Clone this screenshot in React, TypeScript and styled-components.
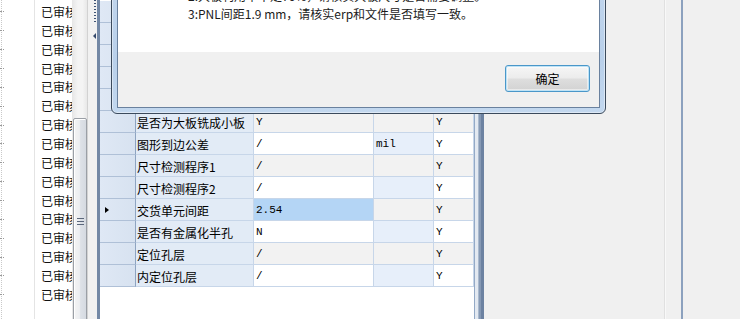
import React from "react";
import styled, { createGlobalStyle } from "styled-components";

const GlobalStyle = createGlobalStyle`
  html, body { margin: 0; padding: 0; background: #f0f0f0; }
  body {
    font-family: "Noto Sans CJK SC", "Liberation Sans", sans-serif;
    font-size: 12px;
    color: #000;
  }
`;

type Tone = "white" | "gray" | "blue" | "name" | "selected";

const toneBg: Record<Tone, string> = {
  white: "#ffffff",
  gray: "#f2f2f2",
  blue: "#e7effa",
  name: "#e2ebf6",
  selected: "#b4d5f5",
};

interface GridItem {
  name: string;
  value: string;
  unit: string;
  flag: string;
}

// 앞의 5행은 대화상자에 가려져 있어 비워 둔다
const hidden: GridItem = { name: "", value: "", unit: "", flag: "" };

const rows: GridItem[] = [
  hidden,
  hidden,
  hidden,
  hidden,
  hidden,
  { name: "是否为大板铣成小板", value: "Y", unit: "", flag: "Y" },
  { name: "图形到边公差", value: "/", unit: "mil", flag: "Y" },
  { name: "尺寸检测程序1", value: "/", unit: "", flag: "Y" },
  { name: "尺寸检测程序2", value: "/", unit: "", flag: "Y" },
  { name: "交货单元间距", value: "2.54", unit: "", flag: "Y" },
  { name: "是否有金属化半孔", value: "N", unit: "", flag: "Y" },
  { name: "定位孔层", value: "/", unit: "", flag: "Y" },
  { name: "内定位孔层", value: "/", unit: "", flag: "Y" },
];

const CURRENT_ROW = 9;

const Screen = styled.div`
  position: relative;
  display: flex;
  width: 740px;
  height: 319px;
  overflow: hidden;
  background: #f0f0f0;
`;

/* left list */
const ListPane = styled.div`
  width: 72px;
  flex-shrink: 0;
  box-sizing: border-box;
  padding-top: 2.5px;
  overflow: hidden;
  background:
    linear-gradient(#e4e4e4, #e4e4e4) 34px 0 / 1px 100% no-repeat,
    repeating-linear-gradient(to bottom, #c9c9c9 0 1px, transparent 1px 2px) 1px 0 / 1px 100% no-repeat,
    #fff;
`;

const ListRow = styled.div`
  display: flex;
  align-items: center;
  height: 18.87px;
`;

const TreeDash = styled.span`
  width: 4px;
  flex-shrink: 0;
  border-top: 1px dotted #9a9a9a;
`;

const ListLabel = styled.span`
  margin-left: 37px;
  white-space: nowrap;
  font-size: 12px;
  line-height: 18px;
  color: #111;
`;

/* list scrollbar */
const ScrollTrack = styled.div`
  width: 15px;
  flex-shrink: 0;
  box-sizing: border-box;
  padding-top: 118px;
  background: linear-gradient(to right, #e6e6e6, #f4f4f4 40%, #f4f4f4 70%, #e8e8e8);
`;

const ScrollThumb = styled.div`
  height: 206px;
  box-sizing: border-box;
  margin-left: 1px;
  border: 1px solid #9a9fa6;
  border-radius: 2px;
  background: linear-gradient(to right, #f4f4f4, #eceef1 45%, #dde1e7 55%, #d5dae1);
  box-shadow: inset 1px 1px 0 #fff;
  display: flex;
  align-items: center;
  justify-content: center;
`;

const ThumbGrip = styled.span`
  width: 7px;
  height: 5px;
  border-top: 1px solid #5b677b;
  border-bottom: 1px solid #5b677b;
  background: linear-gradient(#5b677b, #5b677b) 0 2px / 100% 1px no-repeat;
`;

/* collapsible splitter */
const Splitter = styled.div`
  width: 8px;
  flex-shrink: 0;
  border-left: 1px solid #d2d2d2;
  border-right: 3px solid #7388a5;
  background: #f1f1f1;
  display: flex;
  flex-direction: column;
  align-items: flex-end;
  padding-right: 1px;
`;

const SplitGrip = styled.span`
  width: 2px;
  height: 23px;
  background: repeating-linear-gradient(to bottom, #3d5273 0 1px, transparent 1px 3px);
`;

const CollapseArrow = styled.span`
  margin-top: 10px;
  width: 0;
  height: 0;
  border-right: 3px solid #34496b;
  border-top: 3.5px solid transparent;
  border-bottom: 3.5px solid transparent;
`;

/* property grid */
const Grid = styled.div`
  width: 374px;
  flex-shrink: 0;
  box-sizing: border-box;
  padding-top: 1px;
  background: #fff;
`;

const GridRow = styled.div`
  display: flex;
  height: 22px;
`;

const RowHeader = styled.div`
  width: 36px;
  flex-shrink: 0;
  box-sizing: border-box;
  border-right: 1px solid #8ea4c1;
  border-bottom: 1px solid #afc0d7;
  background: linear-gradient(to right, #dfe8f5, #d7e2f0);
  display: flex;
  align-items: center;
  padding: 1px 0 0 5px;
`;

const Pointer = styled.span`
  width: 0;
  height: 0;
  border-left: 4px solid #000;
  border-top: 3.5px solid transparent;
  border-bottom: 3.5px solid transparent;
`;

const Cell = styled.div<{ $w: number; $tone: Tone; $mono?: boolean }>`
  width: ${(p) => p.$w}px;
  flex-shrink: 0;
  box-sizing: border-box;
  border-right: 1px solid #c7d6e9;
  border-bottom: 1px solid #c7d6e9;
  background: ${(p) => toneBg[p.$tone]};
  padding: 2px 0 0 ${(p) => (p.$mono ? 2 : 1)}px;
  line-height: 19px;
  white-space: nowrap;
  overflow: hidden;
  color: #000;
  font-family: ${(p) =>
    p.$mono
      ? '"Liberation Mono", "DejaVu Sans Mono", monospace'
      : '"Noto Sans CJK SC", "Liberation Sans", sans-serif'};
  font-size: ${(p) => (p.$mono ? "11px" : "12px")};
`;

const GridEdge = styled.div`
  width: 10px;
  flex-shrink: 0;
  background: linear-gradient(
    to right,
    #93a9c6 0 1px,
    #e3e9f1 1px 4px,
    #a9b9ce 4px 5px,
    #8699b4 5px 7px,
    #6c82a1 7px 10px
  );
`;

/* right side */
const RightPane = styled.div`
  flex: 1;
  display: flex;
  background: #f0f0f0;
`;

const PaneGap = styled.div<{ $w: number }>`
  width: ${(p) => p.$w}px;
  flex-shrink: 0;
`;

const SoftDivider = styled.div`
  width: 2px;
  flex-shrink: 0;
  background: linear-gradient(to right, #e0e0e0 50%, #f8f8f8 50%);
`;

const BlueDivider = styled.div`
  width: 2px;
  flex-shrink: 0;
  background: #8ca1be;
`;

/* message box */
const Dialog = styled.div`
  position: absolute;
  left: 111px;
  top: -62px;
  width: 495px;
  height: 176px;
  box-sizing: border-box;
  border: 1px solid #3b4a5c;
  border-radius: 0 0 6px 6px;
  padding: 5px;
  background: linear-gradient(to bottom, #c6d9ef, #b9d0ea 70%, #c3d8ef);
  box-shadow: inset 0 0 0 1px rgba(255, 255, 255, 0.45);
  display: flex;
`;

const DialogClient = styled.div`
  flex: 1;
  border: 1px solid #6a819e;
  display: flex;
  flex-direction: column;
  background: #fff;
`;

const MessageArea = styled.div`
  flex: 1;
  display: flex;
  flex-direction: column;
  justify-content: flex-end;
  padding: 0 0 29px 70px;
  font-size: 12px;
  line-height: 18px;
  color: #1b1b1b;
  white-space: nowrap;
`;

const ButtonBar = styled.div`
  height: 55px;
  box-sizing: border-box;
  background: #f0f0f0;
  display: flex;
  justify-content: flex-end;
  align-items: flex-start;
  padding: 13px 9px 0 0;
`;

const DialogButton = styled.button`
  width: 85px;
  height: 27px;
  box-sizing: border-box;
  border: 1px solid #4a97c9;
  border-radius: 3px;
  background: linear-gradient(#f6f6f6 0%, #ececec 48%, #dedede 52%, #d2d2d2 100%);
  box-shadow: inset 0 0 0 1px #bfe3f6, inset 0 0 0 2px rgba(255, 255, 255, 0.5);
  font-family: "Noto Sans CJK SC", "Liberation Sans", sans-serif;
  font-size: 12px;
  color: #000;
  padding: 0;
`;

export default function App() {
  return (
    <>
      <GlobalStyle />
      <Screen>
        <ListPane>
          {Array.from({ length: 16 }).map((_, i) => (
            <ListRow key={i}>
              <TreeDash />
              <ListLabel>已审核</ListLabel>
            </ListRow>
          ))}
        </ListPane>

        <ScrollTrack>
          <ScrollThumb>
            <ThumbGrip />
          </ScrollThumb>
        </ScrollTrack>

        <Splitter>
          <SplitGrip />
          <CollapseArrow />
        </Splitter>

        <Grid>
          {rows.map((row, i) => {
            const odd = i % 2 === 1;
            const current = i === CURRENT_ROW;
            return (
              <GridRow key={i}>
                <RowHeader>{current && <Pointer />}</RowHeader>
                <Cell $w={118} $tone="name">{row.name}</Cell>
                <Cell $w={120} $tone={current ? "selected" : odd ? "gray" : "white"} $mono>
                  {row.value}
                </Cell>
                <Cell $w={60} $tone={odd ? "gray" : "blue"} $mono>
                  {row.unit}
                </Cell>
                <Cell $w={40} $tone={odd ? "gray" : "white"} $mono>
                  {row.flag}
                </Cell>
              </GridRow>
            );
          })}
        </Grid>
        <GridEdge />

        <RightPane>
          <PaneGap $w={180} />
          <SoftDivider />
          <PaneGap $w={15} />
          <BlueDivider />
        </RightPane>

        <Dialog>
          <DialogClient>
            <MessageArea>
              <div>2:大板利用率不足70%，请核实大板尺寸是否需要调整。</div>
              <div>3:PNL间距1.9 mm，请核实erp和文件是否填写一致。</div>
            </MessageArea>
            <ButtonBar>
              <DialogButton>确定</DialogButton>
            </ButtonBar>
          </DialogClient>
        </Dialog>
      </Screen>
    </>
  );
}
